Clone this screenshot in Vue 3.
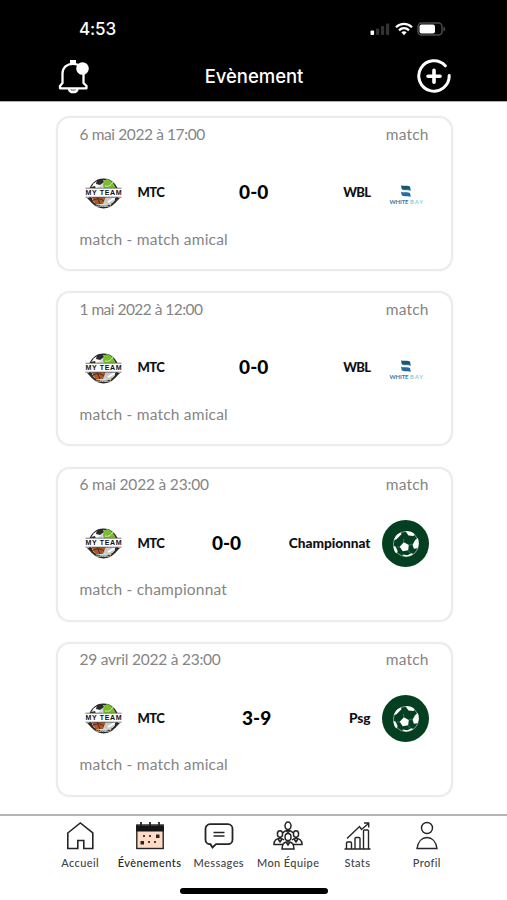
<script setup>
const matches = [
  { date: '6 mai 2022 à 17:00', tracking: -0.4, score: '0-0', opponent: 'WBL', logo: 'wbl', note: 'match - match amical' },
  { date: '1 mai 2022 à 12:00', tracking: -0.53, score: '0-0', opponent: 'WBL', logo: 'wbl', note: 'match - match amical' },
  { date: '6 mai 2022 à 23:00', tracking: -0.18, score: '0-0', opponent: 'Championnat', logo: 'ball', note: 'match - championnat' },
  { date: '29 avril 2022 à 23:00', tracking: -0.23, score: '3-9', opponent: 'Psg', logo: 'ball', note: 'match - match amical' },
]
const tabs = [
  { id: 'home', label: 'Accueil' },
  { id: 'events', label: 'Évènements', active: true },
  { id: 'messages', label: 'Messages' },
  { id: 'team', label: 'Mon Équipe' },
  { id: 'stats', label: 'Stats' },
  { id: 'profile', label: 'Profil' },
]
</script>

<template>
  <div class="screen">
    <header class="top">
      <div class="status">
        <span class="clock">4:53</span>
        <div class="status-icons">
          <svg width="20" height="14" viewBox="0 0 20 14">
            <rect x="0.5" y="8.5" width="3.6" height="4.5" rx="1" fill="#fff" />
            <rect x="6" y="6.5" width="3.2" height="6.5" rx="1" fill="#333" />
            <rect x="11" y="4" width="3.2" height="9" rx="1" fill="#333" />
            <rect x="16" y="1.5" width="3.2" height="11.5" rx="1" fill="#333" />
          </svg>
          <svg class="wifi" width="18" height="14" viewBox="0 0 18 14" fill="none" stroke="#fff" stroke-width="2.3">
            <path d="M1 5.2C5.6.7 12.4.7 17 5.2" />
            <path d="M4 8.3c3-2.8 7-2.8 10 0" />
            <path d="M6.3 10.2c1.7-1.4 3.7-1.4 5.4 0L9 13.2z" fill="#fff" stroke="none" />
          </svg>
          <svg class="battery" width="29" height="14" viewBox="0 0 29 14">
            <rect x="1" y="1" width="24" height="12" rx="3.5" fill="none" stroke="#4b4b4b" stroke-width="1.5" />
            <rect x="2.5" y="2.5" width="15.5" height="9" rx="2" fill="#fff" />
            <path d="M26.5 4.5c2.4 1 2.4 4 0 5z" fill="#4b4b4b" />
          </svg>
        </div>
      </div>
      <div class="bar">
        <svg width="34" height="36" viewBox="0 0 34 36" fill="none" stroke="#fff" stroke-width="2.3" stroke-linejoin="round">
          <path d="M3 30.300V28L5.500 25V15.500C5.500 9.500 10 5.800 16 5.800S26.500 9.500 26.500 15.500V25l3 3v2.300z" />
          <path d="M12 31c.5 4.200 8 4.200 8.500 0" />
          <path d="M14.500 32h4" stroke-width="1" />
          <path d="M13 2h6v4h-6z" fill="#fff" stroke="none" />
          <circle cx="25.500" cy="10.500" r="6.300" fill="#fff" stroke="none" />
        </svg>
        <h1 class="title">Evènement</h1>
        <svg width="34" height="36" viewBox="0 0 34 36" fill="none" stroke="#fff" stroke-linecap="round">
          <path d="M28.300 7.800A15.200 15.200 0 1 0 32.200 17.500" stroke-width="3" />
          <path d="M17 12.300v11.900M11 18.200h12" stroke-width="3.600" />
        </svg>
      </div>
    </header>

    <main class="list">
      <article v-for="m in matches" :key="m.date" class="card">
        <div class="meta">
          <span :style="{ letterSpacing: m.tracking + 'px' }">{{ m.date }}</span>
          <span class="kind">match</span>
        </div>
        <div class="versus">
          <div class="side">
            <svg width="47" height="47" viewBox="0 0 47 47">
              <circle cx="23.500" cy="23.500" r="15" fill="#292b29" />
              <circle cx="23.500" cy="23.500" r="13.200" fill="#d5d9d2" />
              <path d="M11 18c2-5 6-8 11-8l-1 5-5 4z" fill="#fff" />
              <path d="M17 10l5-1 2 3-4 3-4-1zM11 17l4-1 1 3h-6z" fill="#292b29" />
              <path d="M23 16c0-4 2-6 4-7 4 1 7 4 9 10H25z" fill="#79bd2c" />
              <path d="M25 16c4 1 6-1 8-4" fill="none" stroke="#d9eeb8" />
              <path d="M12 27h14l-3 7h-7c-2-2-4-4-4-7" fill="#ad592b" />
              <path d="M17 27l3 7M12 31c4-3 8-3 12 0" fill="none" stroke="#4f2a19" />
              <path d="M26 27h10c-1 4-3 6-8 7l-4-1z" fill="#c8cbc7" />
              <path d="M28 32l7-4" stroke="#fff" stroke-width="2" />
              <path d="M12.300 32.300c6 4.500 16.500 4.500 22.500 0a15 15 0 0 1-22.500 0" fill="#292b29" stroke="#292b29" />
              <rect x="5" y="18" width="37" height="9" fill="#fff" />
              <path d="M5.500 18.200h36M5.500 27.200h36" stroke="#555" stroke-width=".8" />
              <path d="M7 28h5v5zM40 28h-5v5z" fill="#292b29" />
              <text x="5.500" y="25.300" class="mark-name" textLength="36">MY TEAM</text>
              <text x="15.500" y="37" class="mark-sub" textLength="16">CONNECT</text>
            </svg>
            <span class="team caps">MTC</span>
          </div>
          <strong class="score">{{ m.score }}</strong>
          <div class="side">
            <span class="team" :class="{ caps: m.logo === 'wbl' }">{{ m.opponent }}</span>
            <svg v-if="m.logo === 'wbl'" width="47" height="47" viewBox="0 0 47 47">
              <path d="M19 15.200c3 1.500 6-.3 9 1.300l.8 4.200c-3-1.500-6 .3-9-1.300z" fill="#1d5573" />
              <path d="M19 21.700c3 1.500 6-.3 9 1.300l.8 3.800c-3-1.500-6 .3-9-1.300z" fill="#246a9a" />
              <path d="M20 19.400c3 1.500 6-.3 8.700 1.100" fill="none" stroke="#54b7d6" stroke-width=".6" />
              <text x="7.500" y="34" class="wbl-a" textLength="19">WHITE</text>
              <text x="28" y="34" class="wbl-b" textLength="13">BAY</text>
            </svg>
            <svg v-else width="47" height="47" viewBox="0 0 47 47">
              <circle cx="23.500" cy="23.500" r="23.500" fill="#033f20" />
              <circle cx="24" cy="24" r="12.600" fill="none" stroke="#9db8a6" stroke-width=".8" />
              <g fill="#fff">
                <path d="M21.800 22.300l5 2.800-.6 5.200-5.500 1-3-4.600z" />
                <path d="M23.500 11.300c4-.5 7 .5 9.200 3l-1.200 1.700-5-.5z" />
                <path d="M13 17.500c1.300-2.500 3.500-4.200 6-5l.5 1.800-5 5-2.500 1z" />
                <path d="M33.200 20l2.600-2c1.200 3.500 1.200 7-.3 10.300l-3.600.4-1.400-4z" />
                <path d="M11.500 26l2 .5 2.200 4.500-1.300 2.500c-2-2-2.900-4.500-2.900-7.500z" />
                <path d="M20.500 34.500l5 .8 3.800-2 2 .7c-3 2.300-6.800 3-10.300 1.800z" />
              </g>
              <path d="M21.800 22.300l-.3-3.500M26.800 25.100l3-1M17.700 27.300l-2.500-.5M26.200 30.500l2 2.500" stroke="#5f8a70" stroke-width=".7" />
            </svg>
          </div>
        </div>
        <p class="note">{{ m.note }}</p>
      </article>
    </main>

    <footer class="bottom">
      <nav class="tabs">
        <a v-for="t in tabs" :key="t.id" class="tab" :class="{ active: t.active }">
          <svg width="30" height="30" viewBox="0 0 30 30" fill="none" stroke="#252525" stroke-width="1.400">
            <path v-if="t.id === 'home'" d="M2.800 12L15.300 2 27.800 12v15.500h-9V19.500h-6v8h-10z" stroke-width="1.600" />
            <template v-else-if="t.id === 'events'">
              <rect x="1.800" y="4" width="26.400" height="23.500" fill="#fcdcc9" />
              <path d="M1.200 4.500h27.600v6H1.200z" fill="#151515" stroke="none" />
              <path d="M6 1v4M15 1v4M24 1v4" stroke-width="1.800" />
              <path d="M21 13.500h3.500V17H21zM5.500 20H9v3.500H5.500z" fill="#252525" stroke="none" />
              <path d="M8 15h2M14 15h2M13 21h2M19 21h2" stroke="#5f382a" stroke-width="2" />
            </template>
            <template v-else-if="t.id === 'messages'">
              <path d="M6 3.200h18a4.500 4.500 0 0 1 4.500 4.500v11a4.500 4.500 0 0 1-4.500 4.500H12L8.500 26.500l-2-3.300H6a4.500 4.500 0 0 1-4.500-4.500v-11A4.500 4.500 0 0 1 6 3.200z" stroke-width="1.800" />
              <path d="M9.500 11.500H20.500M9.500 15H20.500" />
            </template>
            <g v-else-if="t.id === 'team'" stroke-width="1.500">
              <ellipse cx="15" cy="4.800" rx="3" ry="3.800" />
              <path d="M10 12c1-2 3-2.500 5-2.500s4 .5 5 2.500" />
              <ellipse cx="7" cy="13" rx="2.600" ry="3.300" />
              <ellipse cx="23" cy="13" rx="2.600" ry="3.300" />
              <path d="M10 23.500H1c0-4 1.500-6 6-6 2 0 3 .5 4 1.500M20 23.500h9c0-4-1.500-6-6-6-2 0-3 .5-4 1.500" />
              <ellipse cx="15" cy="16" rx="3" ry="3.600" fill="#fff" />
              <path d="M9 28c0-5 2-7.200 6-7.200s6 2.200 6 7.200zM13 21l2 3 2-3M5 18l2 3 2-3M21 18l2 3 2-3M13 9.500l2 2 2-2" />
            </g>
            <template v-else-if="t.id === 'stats'">
              <path d="M2.500 28h26M4.500 28v-6q0-1 1-1h3q1 0 1 1v6M13 28V17.500q0-1 1-1h3q1 0 1 1V28M21.500 28V10q0-1 1-1h3q1 0 1 1v18" />
              <path d="M5 17.500L17.500 5.500l2 3 7-6M22 2h4.700v4.500" />
            </template>
            <template v-else>
              <circle cx="15" cy="7" r="5.500" />
              <path d="M5 27.500c1-7 5-11 10-11s9 4 10 11z" />
            </template>
          </svg>
          <span>{{ t.label }}</span>
        </a>
      </nav>
      <div class="indicator"></div>
    </footer>
  </div>
</template>

<style>
body { margin: 0; background: #fff; }
</style>

<style scoped>
.screen { display: flex; flex-direction: column; width: 507px; height: 900px; overflow: hidden; background: #fff; font-family: Lato, "Liberation Sans", sans-serif; }
.top { flex: none; box-sizing: border-box; height: 102px; padding: 0 45px; background: linear-gradient(#000, #000) top / 100% 101px no-repeat, #b0b0b0; color: #fff; font-family: Inter, sans-serif; }
.status { display: flex; align-items: center; justify-content: space-between; height: 57px; padding: 0 16px 0 34px; }
.clock { font-size: 17px; font-weight: 500; letter-spacing: -.1px; }
.status-icons { display: flex; align-items: center; }
.wifi { margin-left: 5px; }
.battery { margin-left: 4px; }
.bar { display: flex; align-items: center; justify-content: space-between; height: 38px; padding: 0 11px 0 12px; }
.title { margin: 0; font-size: 18.500px; font-weight: 500; letter-spacing: -.05px; }
.list { flex: 1; display: flex; flex-direction: column; gap: 20.300px; padding: 14px 54.500px 0 55.500px; min-height: 0; }
.card { flex: none; box-sizing: border-box; height: 155px; padding: 5.500px 22px 0; border: 2px solid #ebebeb; border-radius: 14px; box-shadow: 0 0 2px #eee; }
.meta, .note { font-size: 15.500px; line-height: 20px; color: #858585; }
.meta { display: flex; justify-content: space-between; }
.kind { letter-spacing: .15px; }
.versus { display: flex; justify-content: space-between; align-items: center; height: 47px; margin-top: 25px; }
.side { display: flex; align-items: center; gap: 11px; }
.side svg { display: block; position: relative; top: 1px; }
.team { font-size: 13.700px; font-weight: 900; color: #111; line-height: 20px; letter-spacing: -.05px; }
.team.caps { font-size: 13px; letter-spacing: -.6px; }
.score { font-size: 19px; font-weight: 900; line-height: 22px; color: #000; }
.note { margin: 13px 0 0; letter-spacing: .2px; }
.mark-name { font: 900 7px "Liberation Sans", sans-serif; fill: #111; }
.mark-sub { font: 700 4px "Liberation Sans", sans-serif; fill: #ddd; }
.wbl-a { font: 700 6px Lato, sans-serif; fill: #337eab; }
.wbl-b { font: 400 6px Lato, sans-serif; fill: #66c4d5; }
.bottom { flex: none; height: 86px; box-sizing: border-box; border-top: 2px solid #b5b5b5; background: #fff; }
.tabs { display: grid; grid-template-columns: repeat(6, 69.330px); justify-content: center; padding-top: 5px; }
.tab { display: flex; flex-direction: column; align-items: center; gap: 5px; color: #444; font-size: 11px; font-weight: 500; line-height: 14px; letter-spacing: .4px; white-space: nowrap; }
.tab.active { color: #222; letter-spacing: .45px; }
.indicator { width: 148px; height: 6px; border-radius: 3px; background: #000; margin: 18px auto 0; }
</style>
